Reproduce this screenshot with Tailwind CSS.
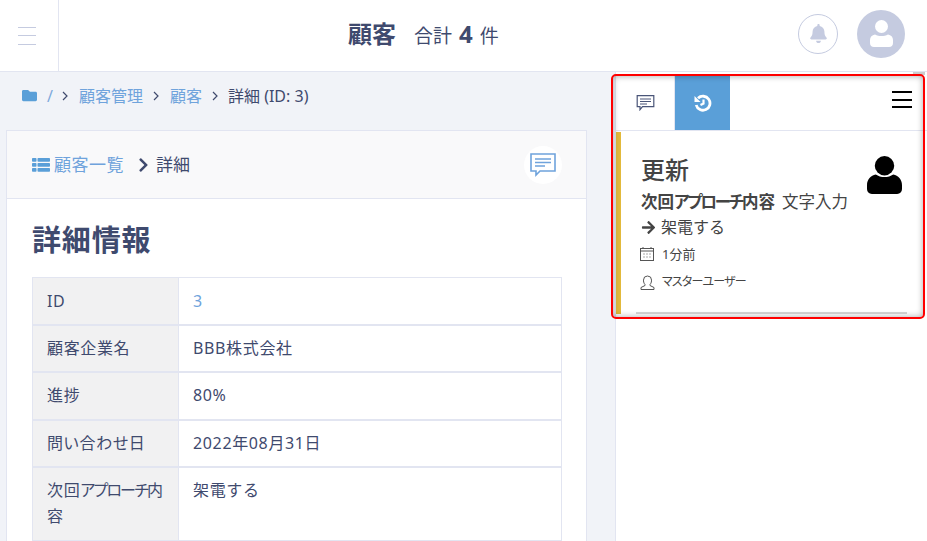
<!DOCTYPE html>
<html lang="ja">
<head>
    <meta charset="UTF-8">
    <meta name="viewport" content="width=device-width, initial-scale=1.0">
    <title>顧客 詳細</title>
    <script src="https://cdn.jsdelivr.net/npm/@tailwindcss/browser@4"></script>
</head>
<body class="h-[541px] overflow-hidden bg-white text-[#3f4a6e] font-['Noto_Sans','Noto_Sans_CJK_JP',sans-serif]">

    <!-- ヘッダー -->
    <header class="relative flex h-[72px] items-center border-b border-[#e2e5f1] bg-white">
        <div class="flex h-full w-[59px] shrink-0 flex-col items-center justify-center gap-[7.500px] border-r border-[#e2e5f1] pr-[5px]">
            <span class="h-px w-[18px] bg-[#c5cbe0]"></span>
            <span class="h-px w-[18px] bg-[#c5cbe0]"></span>
            <span class="h-px w-[18px] bg-[#c5cbe0]"></span>
        </div>
        <div class="flex flex-1 items-baseline pb-[3px] pl-[289px]">
            <h1 class="text-[24px] font-bold">顧客</h1>
            <p class="ml-[18px] text-[19px]">合計 <span class="mx-[2px] text-[24px] font-bold">4</span> 件</p>
        </div>
        <div class="flex items-center gap-[19px] pr-[22px] pb-[4px]">
            <div class="flex size-[40px] items-center justify-center rounded-full border border-[#c5cbe0]">
                <svg class="h-[19px] w-[17px] fill-[#c5cbe0]" viewBox="0 0 448 512"><path d="M224 512c35.32 0 63.97-28.65 63.97-64H160.03c0 35.35 28.65 64 63.97 64zm215.39-149.71c-19.32-20.76-55.47-51.99-55.47-154.29 0-77.7-54.48-139.9-127.94-155.16V32c0-17.67-14.32-32-31.98-32s-31.98 14.33-31.98 32v20.84C118.56 68.1 64.08 130.3 64.08 208c0 102.3-36.15 133.53-55.47 154.29-6 6.45-8.66 14.16-8.61 21.71.11 16.4 12.98 32 32.1 32h383.8c19.12 0 32-15.6 32.1-32 .05-7.55-2.61-15.27-8.61-21.71z"/></svg>
            </div>
            <div class="flex size-[48px] items-center justify-center rounded-full bg-[#c5cbe0]">
                <svg class="h-[27px] w-[23px] fill-white" viewBox="0 0 23 27"><circle cx="11.500" cy="6.500" r="6.500"/><path d="M5 14.500c4 2 9 2 13 0 3 .5 5 2.500 5 5.500v3c0 2.500-1.500 4-4 4H4c-2.500 0-4-1.500-4-4v-3c0-3 2-5 5-5.500z"/></svg>
            </div>
        </div>
    </header>

    <div class="flex">
        <!-- メイン -->
        <main class="h-[469px] w-[615px] shrink-0 overflow-hidden bg-[#f1f3f8] pr-[28px] pl-[6px]">
            <nav class="flex h-[58px] items-center pb-[11px] pl-[16px] text-[16px]">
                <svg class="h-[15px] w-[15px] fill-[#5a9fd8]" viewBox="0 0 512 512"><path d="M464 128H272l-64-64H48C21.49 64 0 85.49 0 112v288c0 26.51 21.49 48 48 48h416c26.51 0 48-21.49 48-48V176c0-26.51-21.49-48-48-48z"/></svg>
                <span class="ml-[10px] text-[#7ea9dc]">/</span>
                <svg class="ml-[9px] h-[10px] w-[6px] fill-none stroke-[#3f4a6e]" viewBox="0 0 6 10"><path d="M1 1l4 4-4 4" stroke-width="1.200"/></svg>
                <a class="ml-[11px] text-[#6fa3dc]">顧客管理</a>
                <svg class="ml-[10px] h-[10px] w-[6px] fill-none stroke-[#3f4a6e]" viewBox="0 0 6 10"><path d="M1 1l4 4-4 4" stroke-width="1.200"/></svg>
                <a class="ml-[11px] text-[#6fa3dc]">顧客</a>
                <svg class="ml-[10px] h-[10px] w-[6px] fill-none stroke-[#3f4a6e]" viewBox="0 0 6 10"><path d="M1 1l4 4-4 4" stroke-width="1.200"/></svg>
                <span class="ml-[10px]">詳細 (ID: 3)</span>
            </nav>

            <section class="border border-[#e2e5f1] bg-white">
                <div class="flex h-[68px] items-center justify-between border-b border-[#e2e5f1] bg-[#f9f9fa] pr-[24px] pl-[25px] text-[17px]">
                    <div class="flex items-center">
                        <svg class="h-[14px] w-[18px] fill-[#5a9fd8]" viewBox="0 0 18 14"><rect width="4.500" height="3.800" rx=".8"/><rect x="5.500" width="12.500" height="3.800" rx=".8"/><rect y="5" width="4.500" height="3.800" rx=".8"/><rect x="5.500" y="5" width="12.500" height="3.800" rx=".8"/><rect y="10" width="4.500" height="3.800" rx=".8"/><rect x="5.500" y="10" width="12.500" height="3.800" rx=".8"/></svg>
                        <a class="ml-[4px] tracking-[0.03em] text-[#6fa3dc]">顧客一覧</a>
                        <svg class="ml-[14px] h-[16px] w-[11px] fill-[#3f4a6e]" viewBox="0 0 320 512"><path d="M285.476 272.971L91.132 467.314c-9.373 9.373-24.569 9.373-33.941 0l-22.667-22.667c-9.357-9.357-9.375-24.522-.04-33.901L188.505 256 34.484 101.255c-9.335-9.379-9.317-24.544.04-33.901l22.667-22.667c9.373-9.373 24.569-9.373 33.941 0L285.475 239.03c9.373 9.372 9.373 24.568.001 33.941z"/></svg>
                        <span class="ml-[7px]">詳細</span>
                    </div>
                    <div class="flex size-[38px] items-center justify-center rounded-full bg-white">
                        <svg class="h-[24px] w-[26px] fill-none stroke-[#6fa3dc]" viewBox="0 0 26 24"><path d="M1 1h24v17H10l-4 4v-4H1z" stroke-width="1.600"/><path d="M5 6h16M5 9.500h16M5 13h10" stroke-width="1.300"/></svg>
                    </div>
                </div>
                <div class="px-[25px]">
                    <h2 class="pt-[21px] pb-[17px] text-[29px] leading-[40px] font-bold tracking-[0.03em]">詳細情報</h2>
                    <table class="w-[530px] table-fixed border-collapse text-[16px] leading-[25.600px] tracking-[0.04em]">
                        <tbody>
                            <tr>
                                <th class="w-[146px] border border-b-2 border-[#e2e5f1] bg-[#f1f1f2] px-[14px] pt-[11px] pb-[9px] text-left align-top font-normal">ID</th>
                                <td class="border border-b-2 border-[#e2e5f1] px-[14px] pt-[11px] pb-[9px] text-[#6fa3dc]">3</td>
                            </tr>
                            <tr>
                                <th class="border border-b-2 border-[#e2e5f1] bg-[#f1f1f2] px-[14px] py-[10px] text-left align-top font-normal">顧客企業名</th>
                                <td class="border border-b-2 border-[#e2e5f1] px-[14px] py-[10px]">BBB株式会社</td>
                            </tr>
                            <tr>
                                <th class="border border-b-2 border-[#e2e5f1] bg-[#f1f1f2] px-[14px] py-[10px] text-left align-top font-normal">進捗</th>
                                <td class="border border-b-2 border-[#e2e5f1] px-[14px] py-[10px]">80%</td>
                            </tr>
                            <tr>
                                <th class="border border-b-2 border-[#e2e5f1] bg-[#f1f1f2] px-[14px] py-[10px] text-left align-top font-normal [font-feature-settings:'palt']">問い合わせ日</th>
                                <td class="border border-b-2 border-[#e2e5f1] px-[14px] py-[10px]">2022年08月31日</td>
                            </tr>
                            <tr>
                                <th class="border border-[#e2e5f1] bg-[#f1f1f2] px-[14px] py-[10px] text-left align-top font-normal [font-feature-settings:'palt']">次回<span class="inline-block tracking-[-0.11em]">アプローチ</span>内<br>容</th>
                                <td class="border border-[#e2e5f1] px-[14px] py-[10px] align-top">架電する</td>
                            </tr>
                        </tbody>
                    </table>
                </div>
            </section>
        </main>

        <!-- サイドパネル -->
        <aside class="relative flex-1 border-l border-[#e2e5f1] bg-white text-[#444]">
            <div class="flex h-[59px] border-b border-[#e2e5f1] pt-[3px]">
                <div class="flex w-[59px] items-center justify-center border-r border-[#e2e5f1]">
                    <svg class="h-[16px] w-[19px] fill-white stroke-[#4a5578]" viewBox="0 0 18 16"><path d="M.700.700h16.600v11H6l-2.500 3v-3H.700z" stroke-width="1.200"/><path d="M3.500 4h11M3.500 6.500h11M3.500 9h7" stroke-width="1"/></svg>
                </div>
                <div class="flex w-[55px] items-center justify-center bg-[#5a9fd8]">
                    <svg class="size-[18px] fill-none stroke-white" viewBox="0 0 18 18"><path d="M4 4.300A7 7 0 1 1 2.200 11" stroke-width="2.800"/><path d="M.5 2v6h6z" fill="#fff" stroke="none"/><path d="M9.500 5.500v4l-3 1.500" stroke-width="2.200"/></svg>
                </div>
                <div class="ml-auto flex flex-col justify-center gap-[5.500px] pr-[15px] pb-[6px]">
                    <span class="h-[2px] w-[20px] bg-black"></span>
                    <span class="h-[2px] w-[20px] bg-black"></span>
                    <span class="h-[2px] w-[20px] bg-black"></span>
                </div>
            </div>

            <article class="relative mt-px mr-[20px] h-[182px] border-l-[5px] border-[#e2b93b] pt-[22px] pl-[20px]">
                <h3 class="text-[24px] leading-[32px] font-medium">更新</h3>
                <p class="mt-[3px] text-[16.500px] leading-[25px] [font-feature-settings:'palt']"><b class="font-bold">次回<span class="inline-block tracking-[-0.13em]">アプローチ</span>内容</b><span class="ml-[7px]">文字入力</span></p>
                <p class="flex items-center text-[16px] leading-[26px]">
                    <svg class="mr-[5px] size-[15px] fill-[#444]" viewBox="0 0 448 512"><path d="M190.5 66.9l22.2-22.2c9.4-9.4 24.6-9.4 33.9 0L441 239c9.4 9.4 9.4 24.6 0 33.9L246.6 467.3c-9.4 9.4-24.6 9.4-33.9 0l-22.2-22.2c-9.5-9.5-9.3-25 .4-34.3L311.4 296H24c-13.3 0-24-10.7-24-24v-32c0-13.3 10.700-24 24-24h287.4L190.9 101.2c-9.8-9.3-10-24.8-.4-34.3z"/></svg>架電する
                </p>
                <p class="mt-[2px] flex items-center text-[13px] leading-[24px]">
                    <svg class="mr-[8px] -ml-px size-[14px] fill-none stroke-[#555]" viewBox="0 0 14 14"><rect x=".5" y="1.500" width="13" height="12"/><path d="M.5 4h13M3 1.500V0M11 1.500V0M3.500 7h1M6.500 7h1M9.500 7h1M3.500 10h1M6.500 10h1M9.500 10h1"/></svg>1分前
                </p>
                <p class="mt-[4px] flex items-center text-[12px] leading-[24px] tracking-[-0.07em] [font-feature-settings:'palt']">
                    <svg class="mr-[7px] -ml-px size-[15px] fill-none stroke-[#555]" viewBox="0 0 15 15"><path d="M5 9.500C3.500 8 3.500 6 3.500 5a4 4 0 0 1 8 0c0 1 0 3-1.500 4.500v1l4 2v2h-13v-2l4-2z"/></svg>マスターユーザー
                </p>
                <svg class="absolute top-[23px] right-[5px] h-[39px] w-[35px] fill-black" viewBox="0 0 36 40"><circle cx="18" cy="11" r="10"/><path d="M9 20c5 3.500 13 3.500 18 0 5 1 9 5 9 11v4c0 3-2 5-5 5H5c-3 0-5-2-5-5v-4c0-6 4-10 9-11z"/></svg>
                <div class="absolute right-0 bottom-0 left-[15px] h-[2px] bg-[#d5d5d5]"></div>
            </article>

            <!-- 強調枠 -->
            <div class="absolute top-0 right-[2px] h-[3px] w-[12px] bg-[#ccc]"></div>
            <div class="absolute top-[2px] left-[-5px] h-[245px] w-[314px] rounded-[5px] border-2 border-[#f00] shadow-[inset_0_0_6px_rgba(0,0,0,0.35)]"></div>
        </aside>
    </div>
</body>
</html>
